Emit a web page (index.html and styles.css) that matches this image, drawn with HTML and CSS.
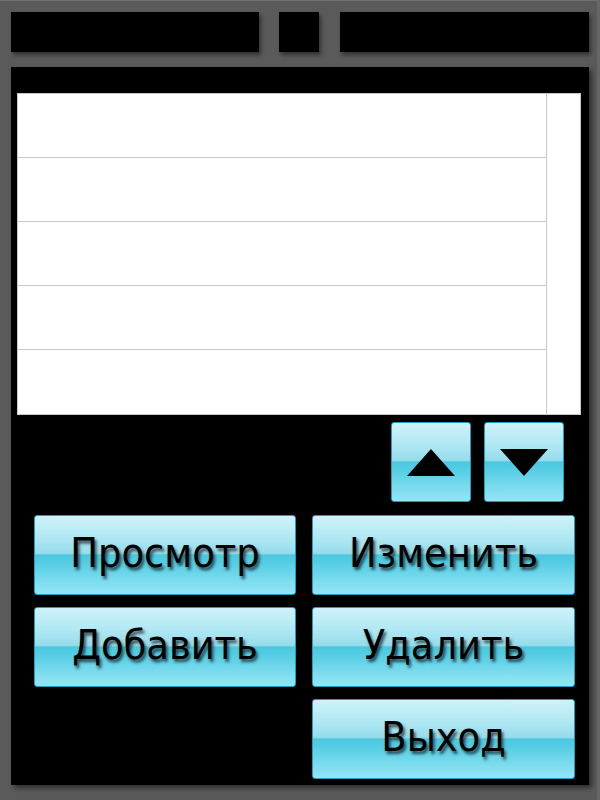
FILE: index.html
```html
<!DOCTYPE html>
<html lang="ru">
<head>
<meta charset="utf-8">
<link rel="stylesheet" href="styles.css">
</head>
<body>
<div class="frame">
  <div class="topbar">
    <div class="tb tb-left"></div>
    <div class="tb tb-mid"></div>
    <div class="tb tb-right"></div>
  </div>
  <div class="panel">
    <div class="list">
      <div class="rows">
        <div class="row"></div>
        <div class="row"></div>
        <div class="row"></div>
        <div class="row"></div>
        <div class="row"></div>
      </div>
      <div class="scroll"></div>
    </div>
    <div class="arrows">
      <div class="btn arrow">
        <svg width="48" height="27" viewBox="0 0 48 27"><polygon points="24,0 48,27 0,27" fill="#000"/></svg>
      </div>
      <div class="btn arrow">
        <svg width="48" height="27" viewBox="0 0 48 27"><polygon points="0,0 48,0 24,27" fill="#000"/></svg>
      </div>
    </div>
    <div class="actions">
      <div class="btn act">Просмотр</div>
      <div class="btn act">Изменить</div>
      <div class="btn act">Добавить</div>
      <div class="btn act">Удалить</div>
      <div class="spacer"></div>
      <div class="btn act">Выход</div>
    </div>
  </div>
</div>
</body>
</html>
```

FILE: styles.css
```css
html, body {
  margin: 0;
  padding: 0;
  background: #5a5a5a;
}
.frame {
  width: 600px;
  height: 800px;
  box-sizing: border-box;
  background: #5a5a5a;
  border-top: 1px solid #707070;
  border-right: 3px solid #666;
  padding: 11px 8px 0 11px;
  font-family: "DejaVu Sans Condensed", "DejaVu Sans", Verdana, sans-serif;
}
.topbar {
  display: flex;
  height: 40px;
}
.tb {
  background: #000;
  height: 40px;
  box-shadow: 2px 3px 4px rgba(0,0,0,0.45);
}
.tb-left { width: 248px; }
.tb-mid { width: 40px; margin-left: 20px; }
.tb-right { width: 249px; margin-left: 21px; }
.panel {
  margin-top: 15px;
  width: 578px;
  height: 718px;
  background: #000;
  box-shadow: 3px 3px 5px rgba(0,0,0,0.5);
  box-sizing: border-box;
  padding: 26px 8px 0 6px;
}
.list {
  display: flex;
  height: 322px;
  background: #fff;
  border: 1px solid #c8c8c8;
  box-sizing: border-box;
}
.rows {
  flex: 1;
  display: flex;
  flex-direction: column;
  border-right: 1px solid #c8c8c8;
}
.row {
  height: 64px;
  border-bottom: 1px solid #c8c8c8;
  box-sizing: border-box;
}
.row:last-child { border-bottom: none; }
.scroll { width: 33px; }
.btn {
  box-sizing: border-box;
  border: 1px solid #1f9fb9;
  border-radius: 3px;
  background: linear-gradient(to bottom, #cff2fa 0%, #b3e9f4 25%, #96dcec 48%, #4ac8e0 50%, #55cde4 60%, #80ddef 85%, #92e6f6 100%);
  display: flex;
  align-items: center;
  justify-content: center;
}
.arrows {
  display: flex;
  justify-content: flex-end;
  gap: 13px;
  margin-top: 7px;
  padding-right: 17px;
}
.arrow {
  width: 80px;
  height: 80px;
}
.arrow svg { display: block; }
.actions {
  display: grid;
  grid-template-columns: 262px 263px;
  column-gap: 16px;
  row-gap: 12px;
  margin-top: 13px;
  margin-left: 17px;
}
.act {
  height: 80px;
  font-size: 41px;
  color: #000;
  text-shadow: 2px 3px 3px rgba(0,0,0,0.65);
  padding-bottom: 4px;
}
```
